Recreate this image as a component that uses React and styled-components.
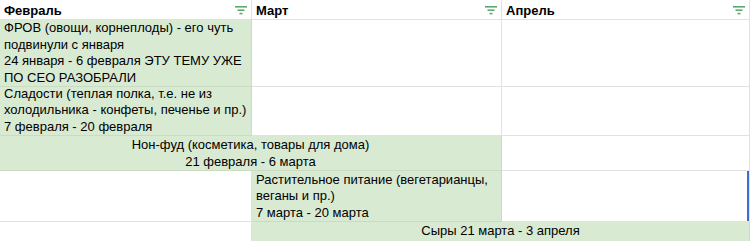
import React from "react";
import styled, { createGlobalStyle } from "styled-components";

const Global = createGlobalStyle`
  html, body { margin: 0; padding: 0; background: #fff; overflow: hidden; }
  body { font-family: "Liberation Sans", Arial, sans-serif; }
`;

const Sheet = styled.div`
  display: grid;
  grid-template-columns: 252px 250px 248px;
  grid-template-rows: 20px 67px 49px 35px 51px 20px;
  width: 750px;
  height: 241px;
  overflow: hidden;
  font-size: 13px;
  color: #000;
`;

const HeaderCell = styled.div`
  display: flex;
  align-items: center;
  justify-content: space-between;
  box-sizing: border-box;
  padding: 2px 4px 0 4px;
  border-right: 1px solid #e2e2e2;
  border-bottom: 1px solid #e2e2e2;
  font-weight: bold;
  line-height: 16px;
`;

const Cell = styled.div`
  display: flex;
  flex-direction: column;
  justify-content: flex-end;
  box-sizing: border-box;
  padding: 0 4px ${(p) => p.$bottom || 0}px 4px;
  border-right: 1px solid #e2e2e2;
  border-bottom: 1px solid #e2e2e2;
  background: ${(p) => (p.$fill ? "#d9ead3" : "#fff")};
  border-color: ${(p) => (p.$fill ? "#c9dcc2" : "#e2e2e2")};
  grid-column: ${(p) => p.$span || "auto"};
  text-align: ${(p) => (p.$center ? "center" : "left")};
  line-height: 16.5px;
  white-space: pre-line;
  box-shadow: ${(p) => (p.$selected ? "inset -2px 0 0 #3b6fd4" : "none")};
`;

const FilterIcon = () => (
  <svg width="12" height="9" viewBox="0 0 12 9">
    <rect x="0" y="0" width="12" height="1.6" fill="#5aab72" />
    <rect x="2.5" y="3.4" width="7" height="1.6" fill="#5aab72" />
    <rect x="4.5" y="6.8" width="3" height="1.6" fill="#5aab72" />
  </svg>
);

const months = ["Февраль", "Март", "Апрель"];

export default function App() {
  return (
    <>
      <Global />
      <Sheet>
        {months.map((m) => (
          <HeaderCell key={m}>
            <span>{m}</span>
            <FilterIcon />
          </HeaderCell>
        ))}

        <Cell $fill>
          {"ФРОВ (овощи, корнеплоды) - его чуть\nподвинули с января\n24 января - 6 февраля ЭТУ ТЕМУ УЖЕ\nПО СЕО РАЗОБРАЛИ"}
        </Cell>
        <Cell />
        <Cell />

        <Cell $fill>
          {"Сладости (теплая полка, т.е. не из\nхолодильника - конфеты, печенье и пр.)\n7 февраля - 20 февраля"}
        </Cell>
        <Cell />
        <Cell />

        <Cell $fill $center $span="span 2">
          {"Нон-фуд (косметика, товары для дома)\n21 февраля - 6 марта"}
        </Cell>
        <Cell />

        <Cell />
        <Cell $fill>
          {"Растительное питание (вегетарианцы,\nвеганы и пр.)\n7 марта - 20 марта"}
        </Cell>
        <Cell $selected />

        <Cell />
        <Cell $fill $center $span="span 2" $bottom={2}>
          {"Сыры 21 марта - 3 апреля"}
        </Cell>
      </Sheet>
    </>
  );
}
